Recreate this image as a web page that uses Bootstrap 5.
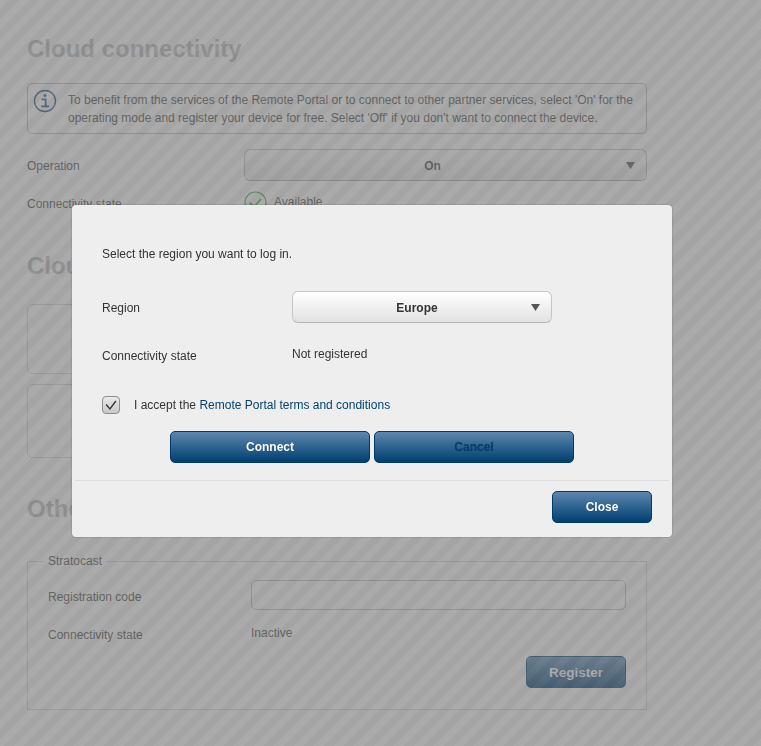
<!DOCTYPE html>
<html lang="en">
<head>
<meta charset="utf-8">
<title>Cloud connectivity</title>
<link href="https://cdn.jsdelivr.net/npm/bootstrap@5.3.0/dist/css/bootstrap.min.css" rel="stylesheet">
<style>
html,body{height:746px;overflow:hidden}
body{background:#eee;color:#444;font:12px/18px "Liberation Sans",Arial,sans-serif}
.page-wrap{padding:35px 114px 0 27px;width:761px;height:746px}
.sec-title{font:bold 24px/28px "Liberation Sans",Arial,sans-serif;color:#b2b2b2;margin:0}
.info-box{margin-top:20px;height:51px;border:1px solid #b0b0b0;border-radius:5px;padding:7px 8px 0 40px;position:relative}
.info-ico{position:absolute;left:5px;top:5px}
.form-line{display:flex;align-items:center}
.lbl-a{width:217px;flex:none}
.sel{height:32px;border:1px solid #c6c6c6;border-radius:6px;color:#333;font:bold 12px "Liberation Sans",Arial,sans-serif;text-align-last:center;
  box-shadow:none;padding:2px 36px 0 10px;
  background-color:#fff;
  background-image:url("data:image/svg+xml,%3Csvg xmlns='http://www.w3.org/2000/svg' width='9' height='7'%3E%3Cpath d='M0 0h9L4.5 7z' fill='%23555'/%3E%3C/svg%3E"),linear-gradient(#fff,#e2e2e2);
  background-repeat:no-repeat;background-position:right 11px center,0 0;background-size:9px 7px,100% 100%;border-bottom-color:#b5b5b5}
.sel-op{flex:1;padding-right:36px;color:#444;border-color:#b4b4b4;border-bottom-color:#a4a4a4;
  background-image:url("data:image/svg+xml,%3Csvg xmlns='http://www.w3.org/2000/svg' width='9' height='7'%3E%3Cpath d='M0 0h9L4.5 7z' fill='%23555'/%3E%3C/svg%3E"),linear-gradient(#eee,#dcdcdc)}
.op-line{margin-top:15px;height:32px}
.op-line .lbl-a{padding-top:2px}
.state-line{margin-top:10px;height:24px;align-items:flex-start}
.state-line .lbl-a{padding-top:4px}
.avail{display:flex;align-items:center;gap:7px;height:23px;line-height:18px}
.avail-txt{margin-top:-1px}
.sec2{margin-top:37px}
.ghost-box{border:1px solid #c8c8c8;border-radius:5px;margin-top:24px;height:70px}
.ghost-box.nxt{margin-top:10px;height:74px}
.sec3{margin-top:37px}
.fset{margin-top:38px;height:149px;border:1px solid #c9c9c9;padding:18px 20px 0;position:relative}
.fset-title{position:absolute;left:16px;top:-10px;padding:0 4px;background:#eee;width:auto;float:none;font-size:12px;line-height:18px;margin:0}
.lbl-b{width:203px;flex:none}
.reg-lbl{padding-top:4px}
.txt-in{height:30px;flex:1;border:1px solid #b2b2b2;border-radius:5px;background:#eee;box-shadow:none}
.fset-state{margin-top:15px;align-items:flex-start;height:18px}
.fset-state .lbl-b{padding-top:1px}
.fset-state span:last-child{margin-top:-1px}
.fset-act{display:flex;justify-content:flex-end;margin-top:13px}
.act-btn{height:32px;width:100px;padding:0;border:1px solid #003a68;border-radius:5px;color:#fff;font:bold 12px "Liberation Sans",Arial,sans-serif;
  background:linear-gradient(#5c87ae,#003e70);text-shadow:0 0 1px rgba(0,0,0,.3)}
.act-btn:hover,.act-btn:active{color:#fff;background:linear-gradient(#5c87ae,#003e70);border-color:#003a68}
.act-btn.wide{width:200px}
.act-btn.mute,.act-btn.mute:hover{color:#04406f}
.act-btn.dim{color:#eee;font-size:13.5px}
.veil{--bs-backdrop-opacity:.6;opacity:.6;background-color:#777;background-image:repeating-linear-gradient(135deg,#7e7e7e 0,#7e7e7e 7.07px,#737373 7.07px,#737373 14.14px)}
.dlg{max-width:none;width:600px;margin:205px 0 0 72px}
.dlg .modal-content{height:332px;background:#eee;border:0;border-radius:4px;box-shadow:0 0 2px rgba(0,0,0,.3);color:#333}
.dlg-body{padding:40px 30px 0;flex:none;height:275px}
.dlg-lbl{width:190px;flex:none}
.reg-line{margin-top:28px;height:32px}
.reg-line .dlg-lbl{padding-top:2px}
.reg-line .sel{width:260px;flex:none;padding-right:20px}
.conn-line{margin-top:24px;align-items:flex-start;height:18px}
.conn-line span:last-child{margin-top:-2px}
.acc-line{margin-top:31px;height:18px;gap:14px}
.form-check-input.acc-box,.form-check-input.acc-box:checked{width:18px;height:18px;margin:0;flex:none;border:1px solid #8e8e8e;border-radius:4px;
  background-color:#ddd;
  background-image:url("data:image/svg+xml,%3Csvg xmlns='http://www.w3.org/2000/svg' viewBox='0 0 18 18'%3E%3Cpath d='M3.5 8.5L7.8 13.5L14.5 4.5' fill='none' stroke='%23333' stroke-width='1.5'/%3E%3C/svg%3E"),linear-gradient(#eaeaea,#c8c8c8);
  background-size:100% 100%}
.terms-link{color:#04406f;text-decoration:none}
.btn-pair{margin-top:17px;margin-left:68px;gap:4px}
.dlg-foot{height:57px;margin:0 3px;padding:10px 17px 0 0;border-top:1px solid #ddd;display:flex;justify-content:flex-end;align-items:flex-start}
</style>
</head>
<body>
<div class="page-wrap">
  <h2 class="sec-title">Cloud connectivity</h2>
  <div class="info-box">
    <svg class="info-ico" width="24" height="24" viewBox="0 0 24 24" fill="none" stroke="#1f4f7c" aria-hidden="true">
      <circle cx="12" cy="12" r="10.5" stroke-width="1.3"/>
      <circle cx="12" cy="6.6" r="1.5" fill="#1f4f7c" stroke="none"/>
      <path d="M8.6 10.4h4v6.6M8 17.4h8" stroke-width="1.8"/>
    </svg>
    To benefit from the services of the Remote Portal or to connect to other partner services, select 'On' for the operating mode and register your device for free. Select 'Off' if you don't want to connect the device.
  </div>
  <div class="form-line op-line">
    <span class="lbl-a">Operation</span>
    <select class="form-select sel sel-op"><option>On</option></select>
  </div>
  <div class="form-line state-line">
    <span class="lbl-a">Connectivity state</span>
    <span class="avail">
      <svg width="23" height="23" viewBox="0 0 23 23" fill="none" stroke="#2f9e3a" aria-hidden="true"><circle cx="11.5" cy="11.5" r="10.5" stroke-width="1.2"/><path d="M6 12l4 4 7-8" stroke-width="1.8"/></svg>
      <span class="avail-txt">Available</span>
    </span>
  </div>
  <h2 class="sec-title sec2">Cloud</h2>
  <div class="ghost-box"></div>
  <div class="ghost-box nxt"></div>
  <h2 class="sec-title sec3">Other</h2>
  <fieldset class="fset">
    <legend class="fset-title">Stratocast</legend>
    <div class="form-line">
      <span class="lbl-b reg-lbl">Registration code</span>
      <input class="form-control txt-in" type="text" aria-label="Registration code">
    </div>
    <div class="form-line fset-state">
      <span class="lbl-b">Connectivity state</span>
      <span>Inactive</span>
    </div>
    <div class="fset-act"><button type="button" class="btn act-btn dim">Register</button></div>
  </fieldset>
</div>

<div class="modal-backdrop show veil"></div>
<div class="modal d-block" tabindex="-1">
  <div class="modal-dialog dlg">
    <div class="modal-content">
      <div class="modal-body dlg-body">
        <div>Select the region you want to log in.</div>
        <div class="form-line reg-line">
          <span class="dlg-lbl">Region</span>
          <select class="form-select sel"><option>Europe</option></select>
        </div>
        <div class="form-line conn-line">
          <span class="dlg-lbl">Connectivity state</span>
          <span>Not registered</span>
        </div>
        <div class="form-line acc-line">
          <input class="form-check-input acc-box" type="checkbox" checked aria-label="Accept terms">
          <span>I accept the <a href="#" class="terms-link">Remote Portal terms and conditions</a></span>
        </div>
        <div class="d-flex btn-pair">
          <button type="button" class="btn act-btn wide">Connect</button>
          <button type="button" class="btn act-btn wide mute">Cancel</button>
        </div>
      </div>
      <div class="dlg-foot"><button type="button" class="btn act-btn">Close</button></div>
    </div>
  </div>
</div>
</body>
</html>
